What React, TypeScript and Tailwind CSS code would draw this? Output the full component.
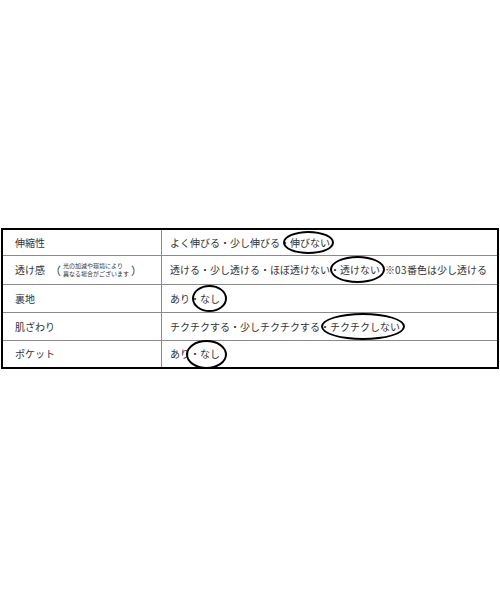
const font = { fontFamily: '"Noto Sans CJK JP", "Noto Sans", sans-serif' };

function Circled({ children, box }: { children: React.ReactNode; box: string }) {
  return (
    <span className="relative inline-block">
      {children}
      <span className={`pointer-events-none absolute rounded-[50%] border-2 border-black ${box}`} />
    </span>
  );
}

function Row({ label, children, h, first }: { label: React.ReactNode; children: React.ReactNode; h: string; first?: boolean }) {
  return (
    <div className={`flex ${h} ${first ? "" : "border-t border-[#8a8a8a]"}`}>
      <div className="flex w-[159px] shrink-0 items-center border-r border-[#8a8a8a] pl-[12px]">{label}</div>
      <div className="flex flex-1 items-center whitespace-nowrap pl-[8px]">{children}</div>
    </div>
  );
}

export default function App() {
  return (
    <div className="h-[600px] w-[500px] bg-white pt-[228px]" style={font}>
      <div className="ml-[1px] w-[498px] border-2 border-black text-[10px] leading-none text-[#333]">
        <Row first h="h-[25px]" label="伸縮性">
          よく伸びる・少し伸びる・
          <Circled box="-left-[7px] -right-[4px] -top-[7px] -bottom-[6px]">伸びない</Circled>
        </Row>
        <Row
          h="h-[29px]"
          label={
            <div className="flex items-center">
              <span>透け感</span>
              <span className="ml-[5px] text-[11px]">（</span>
              <span className="ml-[2px] flex flex-col text-[6px] leading-[8.5px] text-[#333]">
                <span>光の加減や環境により</span>
                <span>異なる場合がございます</span>
              </span>
              <span className="ml-[2px] text-[11px]">）</span>
            </div>
          }
        >
          透ける・少し透ける・ほぼ透けない・
          <Circled box="-left-[10px] -right-[5px] -top-[9px] -bottom-[8px]">透けない</Circled>
          <span className="ml-[5px]">※</span>
          <span className="tracking-[0.5px]">03</span>
          <span>番色は少し透ける</span>
        </Row>
        <Row h="h-[28px]" label="裏地">
          あり・
          <Circled box="-left-[8px] -right-[7px] -top-[9px] -bottom-[8px]">なし</Circled>
        </Row>
        <Row h="h-[28px]" label="肌ざわり">
          チクチクする・少しチクチクする・
          <Circled box="-left-[9px] -right-[5px] -top-[9px] -bottom-[8px]">チクチクしない</Circled>
        </Row>
        <Row h="h-[27px]" label="ポケット">
          あり
          <Circled box="-left-[4px] -right-[7px] -top-[9px] -bottom-[10px]">・なし</Circled>
        </Row>
      </div>
    </div>
  );
}
